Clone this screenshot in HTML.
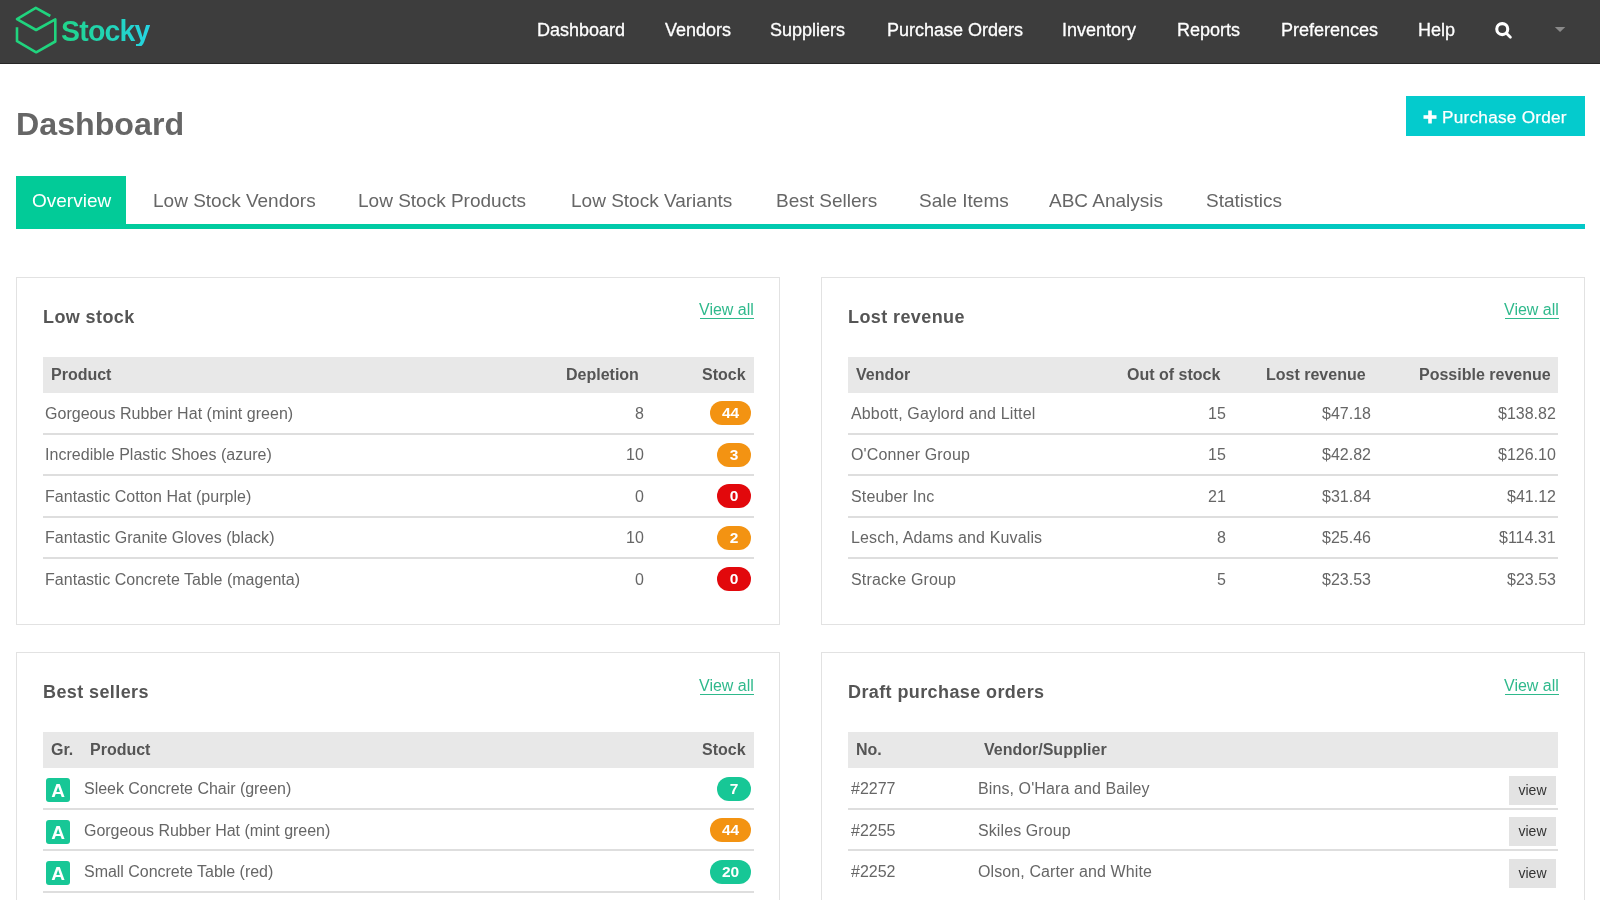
<!DOCTYPE html>
<html><head><meta charset="utf-8"><title>Stocky Dashboard</title>
<style>
html,body{margin:0;padding:0;}
body{width:1600px;height:900px;overflow:hidden;position:relative;background:#fff;font-family:"Liberation Sans",sans-serif;}
.t{position:absolute;white-space:nowrap;will-change:transform;}
.b{will-change:transform;}
</style></head><body>
<div style="position:absolute;left:0px;top:0px;width:1600px;height:63px;background:#3d3d3d"></div>
<div style="position:absolute;left:0px;top:63px;width:1600px;height:1px;background:#262626"></div>
<svg style="position:absolute;left:0;top:0" width="60" height="64" viewBox="0 0 60 64">
<polyline points="50.3,16.0 35.8,7.9 17.0,19.2 36.1,30.0 55.3,19.3 55.3,41.5 36.2,52.3 17.0,41.2 17.0,27.2" fill="none" stroke="#20d47e" stroke-width="2.6" stroke-linejoin="round" stroke-linecap="butt"/>
</svg>
<div class="t" style="left:61.20px;top:16.87px;font-size:28.5px;line-height:28.5px;color:#666;font-weight:700;background:linear-gradient(90deg,#20d488 0%,#22d4b8 55%,#25d4e4 100%);-webkit-background-clip:text;background-clip:text;color:transparent;letter-spacing:-0.8px;transform:scaleY(1.05);transform-origin:0 24.1px;">Stocky</div>
<div class="t" style="left:536.50px;top:21.36px;font-size:18px;line-height:18px;color:#fff;font-weight:400;-webkit-text-stroke:0.3px #fff;">Dashboard</div>
<div class="t" style="left:664.50px;top:21.36px;font-size:18px;line-height:18px;color:#fff;font-weight:400;-webkit-text-stroke:0.3px #fff;">Vendors</div>
<div class="t" style="left:770.25px;top:21.36px;font-size:18px;line-height:18px;color:#fff;font-weight:400;-webkit-text-stroke:0.3px #fff;">Suppliers</div>
<div class="t" style="left:886.50px;top:21.36px;font-size:18px;line-height:18px;color:#fff;font-weight:400;-webkit-text-stroke:0.3px #fff;">Purchase Orders</div>
<div class="t" style="left:1061.50px;top:21.36px;font-size:18px;line-height:18px;color:#fff;font-weight:400;-webkit-text-stroke:0.3px #fff;">Inventory</div>
<div class="t" style="left:1177.00px;top:21.36px;font-size:18px;line-height:18px;color:#fff;font-weight:400;-webkit-text-stroke:0.3px #fff;">Reports</div>
<div class="t" style="left:1280.50px;top:21.36px;font-size:18px;line-height:18px;color:#fff;font-weight:400;-webkit-text-stroke:0.3px #fff;">Preferences</div>
<div class="t" style="left:1417.50px;top:21.36px;font-size:18px;line-height:18px;color:#fff;font-weight:400;-webkit-text-stroke:0.3px #fff;">Help</div>
<svg style="position:absolute;left:1490px;top:17px" width="26" height="26" viewBox="0 0 26 26">
<circle cx="12.25" cy="12.1" r="5.5" fill="none" stroke="#fff" stroke-width="3.1"/>
<line x1="16.4" y1="16.3" x2="20.4" y2="20.3" stroke="#fff" stroke-width="2.8" stroke-linecap="round"/>
</svg>
<svg style="position:absolute;left:1552px;top:24px" width="16" height="12" viewBox="0 0 16 12"><polygon points="2.8,2.9 13.3,2.9 8.05,8.1" fill="#8a8a8a"/></svg>
<div class="t" style="left:16.00px;top:108.14px;font-size:32.2px;line-height:32.2px;color:#666;font-weight:700;">Dashboard</div>
<div style="position:absolute;left:1406px;top:96px;width:179px;height:40px;background:#04cbcd"></div>
<svg style="position:absolute;left:1423px;top:110px" width="14" height="14" viewBox="0 0 14 14"><rect x="5.2" y="0.5" width="3.6" height="13" fill="#fff"/><rect x="0.5" y="5.2" width="13" height="3.6" fill="#fff"/></svg>
<div class="t" style="left:1441.50px;top:109.44px;font-size:17.2px;line-height:17.2px;color:#fff;font-weight:400;letter-spacing:0.25px;-webkit-text-stroke:0.25px #fff;">Purchase Order</div>
<div style="position:absolute;left:16px;top:176px;width:110px;height:48px;background:#02cb98"></div>
<div style="position:absolute;left:16px;top:224px;width:1569px;height:5px;background:linear-gradient(90deg,#00cc99,#03c8c8)"></div>
<div class="t" style="left:32.00px;top:190.92px;font-size:19px;line-height:19px;color:#fff;font-weight:400;">Overview</div>
<div class="t" style="left:152.90px;top:190.92px;font-size:19px;line-height:19px;color:#666;font-weight:400;">Low Stock Vendors</div>
<div class="t" style="left:357.75px;top:190.92px;font-size:19px;line-height:19px;color:#666;font-weight:400;">Low Stock Products</div>
<div class="t" style="left:571.25px;top:190.92px;font-size:19px;line-height:19px;color:#666;font-weight:400;">Low Stock Variants</div>
<div class="t" style="left:776.00px;top:190.92px;font-size:19px;line-height:19px;color:#666;font-weight:400;">Best Sellers</div>
<div class="t" style="left:918.50px;top:190.92px;font-size:19px;line-height:19px;color:#666;font-weight:400;">Sale Items</div>
<div class="t" style="left:1049.25px;top:190.92px;font-size:19px;line-height:19px;color:#666;font-weight:400;">ABC Analysis</div>
<div class="t" style="left:1205.50px;top:190.92px;font-size:19px;line-height:19px;color:#666;font-weight:400;">Statistics</div>
<div style="position:absolute;left:16px;top:277px;width:764px;height:348px;border:1px solid #e2e2e2;box-sizing:border-box;background:#fff"></div>
<div style="position:absolute;left:821px;top:277px;width:764px;height:348px;border:1px solid #e2e2e2;box-sizing:border-box;background:#fff"></div>
<div style="position:absolute;left:16px;top:652px;width:764px;height:308px;border:1px solid #e2e2e2;box-sizing:border-box;background:#fff"></div>
<div style="position:absolute;left:821px;top:652px;width:764px;height:308px;border:1px solid #e2e2e2;box-sizing:border-box;background:#fff"></div>
<div class="t" style="left:43.00px;top:307.66px;font-size:18px;line-height:18px;color:#555;font-weight:700;letter-spacing:0.4px;">Low stock</div>
<div class="t" style="right:845.80px;top:302.06px;font-size:16px;line-height:16px;color:#2fb98c;font-weight:400;">View all</div>
<div style="position:absolute;left:700.0px;top:318.20000000000005px;width:54.0px;height:1.2px;background:#2fb98c"></div>
<div style="position:absolute;left:43px;top:357px;width:711px;height:35.5px;background:#e8e8e8"></div>
<div style="position:absolute;left:43px;top:432.5px;width:711px;height:2.0px;background:#dedede"></div>
<div style="position:absolute;left:43px;top:474.0px;width:711px;height:2.0px;background:#dedede"></div>
<div style="position:absolute;left:43px;top:515.5px;width:711px;height:2.0px;background:#dedede"></div>
<div style="position:absolute;left:43px;top:557.0px;width:711px;height:2.0px;background:#dedede"></div>
<div class="t" style="left:51.00px;top:366.86px;font-size:16px;line-height:16px;color:#555;font-weight:700;">Product</div>
<div class="t" style="right:961.50px;top:366.86px;font-size:16px;line-height:16px;color:#555;font-weight:700;">Depletion</div>
<div class="t" style="right:854.50px;top:366.86px;font-size:16px;line-height:16px;color:#555;font-weight:700;">Stock</div>
<div class="t" style="left:45.00px;top:405.76px;font-size:16px;line-height:16px;color:#666;font-weight:400;letter-spacing:0.03px;">Gorgeous Rubber Hat (mint green)</div>
<div class="t" style="right:956.20px;top:405.76px;font-size:16px;line-height:16px;color:#666;font-weight:400;">8</div>
<div class="b" style="position:absolute;left:710px;top:401.0px;width:41px;height:24px;border-radius:12px;background:#f39312;color:#fff;font-weight:700;font-size:15.5px;line-height:24px;text-align:center">44</div>
<div class="t" style="left:45.00px;top:447.26px;font-size:16px;line-height:16px;color:#666;font-weight:400;letter-spacing:0.03px;">Incredible Plastic Shoes (azure)</div>
<div class="t" style="right:956.20px;top:447.26px;font-size:16px;line-height:16px;color:#666;font-weight:400;">10</div>
<div class="b" style="position:absolute;left:717px;top:442.5px;width:34px;height:24px;border-radius:12px;background:#f39312;color:#fff;font-weight:700;font-size:15.5px;line-height:24px;text-align:center">3</div>
<div class="t" style="left:45.00px;top:488.76px;font-size:16px;line-height:16px;color:#666;font-weight:400;letter-spacing:0.03px;">Fantastic Cotton Hat (purple)</div>
<div class="t" style="right:956.20px;top:488.76px;font-size:16px;line-height:16px;color:#666;font-weight:400;">0</div>
<div class="b" style="position:absolute;left:717px;top:484.0px;width:34px;height:24px;border-radius:12px;background:#e2080c;color:#fff;font-weight:700;font-size:15.5px;line-height:24px;text-align:center">0</div>
<div class="t" style="left:45.00px;top:530.26px;font-size:16px;line-height:16px;color:#666;font-weight:400;letter-spacing:0.03px;">Fantastic Granite Gloves (black)</div>
<div class="t" style="right:956.20px;top:530.26px;font-size:16px;line-height:16px;color:#666;font-weight:400;">10</div>
<div class="b" style="position:absolute;left:717px;top:525.5px;width:34px;height:24px;border-radius:12px;background:#f39312;color:#fff;font-weight:700;font-size:15.5px;line-height:24px;text-align:center">2</div>
<div class="t" style="left:45.00px;top:571.76px;font-size:16px;line-height:16px;color:#666;font-weight:400;letter-spacing:0.03px;">Fantastic Concrete Table (magenta)</div>
<div class="t" style="right:956.20px;top:571.76px;font-size:16px;line-height:16px;color:#666;font-weight:400;">0</div>
<div class="b" style="position:absolute;left:717px;top:567.0px;width:34px;height:24px;border-radius:12px;background:#e2080c;color:#fff;font-weight:700;font-size:15.5px;line-height:24px;text-align:center">0</div>
<div class="t" style="left:848.00px;top:307.66px;font-size:18px;line-height:18px;color:#555;font-weight:700;letter-spacing:0.4px;">Lost revenue</div>
<div class="t" style="right:41.30px;top:302.06px;font-size:16px;line-height:16px;color:#2fb98c;font-weight:400;">View all</div>
<div style="position:absolute;left:1504.5px;top:318.20000000000005px;width:54.0px;height:1.2px;background:#2fb98c"></div>
<div style="position:absolute;left:848px;top:357px;width:710px;height:35.5px;background:#e8e8e8"></div>
<div style="position:absolute;left:848px;top:432.5px;width:710px;height:2.0px;background:#dedede"></div>
<div style="position:absolute;left:848px;top:474.0px;width:710px;height:2.0px;background:#dedede"></div>
<div style="position:absolute;left:848px;top:515.5px;width:710px;height:2.0px;background:#dedede"></div>
<div style="position:absolute;left:848px;top:557.0px;width:710px;height:2.0px;background:#dedede"></div>
<div class="t" style="left:855.50px;top:366.86px;font-size:16px;line-height:16px;color:#555;font-weight:700;">Vendor</div>
<div class="t" style="right:380.00px;top:366.86px;font-size:16px;line-height:16px;color:#555;font-weight:700;">Out of stock</div>
<div class="t" style="right:234.50px;top:366.86px;font-size:16px;line-height:16px;color:#555;font-weight:700;">Lost revenue</div>
<div class="t" style="right:49.50px;top:366.86px;font-size:16px;line-height:16px;color:#555;font-weight:700;">Possible revenue</div>
<div class="t" style="left:850.50px;top:405.76px;font-size:16px;line-height:16px;color:#666;font-weight:400;letter-spacing:0.15px;">Abbott, Gaylord and Littel</div>
<div class="t" style="right:374.30px;top:405.76px;font-size:16px;line-height:16px;color:#666;font-weight:400;">15</div>
<div class="t" style="right:229.30px;top:405.76px;font-size:16px;line-height:16px;color:#666;font-weight:400;">$47.18</div>
<div class="t" style="right:44.30px;top:405.76px;font-size:16px;line-height:16px;color:#666;font-weight:400;">$138.82</div>
<div class="t" style="left:850.50px;top:447.26px;font-size:16px;line-height:16px;color:#666;font-weight:400;letter-spacing:0.15px;">O'Conner Group</div>
<div class="t" style="right:374.30px;top:447.26px;font-size:16px;line-height:16px;color:#666;font-weight:400;">15</div>
<div class="t" style="right:229.30px;top:447.26px;font-size:16px;line-height:16px;color:#666;font-weight:400;">$42.82</div>
<div class="t" style="right:44.30px;top:447.26px;font-size:16px;line-height:16px;color:#666;font-weight:400;">$126.10</div>
<div class="t" style="left:850.50px;top:488.76px;font-size:16px;line-height:16px;color:#666;font-weight:400;letter-spacing:0.15px;">Steuber Inc</div>
<div class="t" style="right:374.30px;top:488.76px;font-size:16px;line-height:16px;color:#666;font-weight:400;">21</div>
<div class="t" style="right:229.30px;top:488.76px;font-size:16px;line-height:16px;color:#666;font-weight:400;">$31.84</div>
<div class="t" style="right:44.30px;top:488.76px;font-size:16px;line-height:16px;color:#666;font-weight:400;">$41.12</div>
<div class="t" style="left:850.50px;top:530.26px;font-size:16px;line-height:16px;color:#666;font-weight:400;letter-spacing:0.15px;">Lesch, Adams and Kuvalis</div>
<div class="t" style="right:374.30px;top:530.26px;font-size:16px;line-height:16px;color:#666;font-weight:400;">8</div>
<div class="t" style="right:229.30px;top:530.26px;font-size:16px;line-height:16px;color:#666;font-weight:400;">$25.46</div>
<div class="t" style="right:44.30px;top:530.26px;font-size:16px;line-height:16px;color:#666;font-weight:400;">$114.31</div>
<div class="t" style="left:850.50px;top:571.76px;font-size:16px;line-height:16px;color:#666;font-weight:400;letter-spacing:0.15px;">Stracke Group</div>
<div class="t" style="right:374.30px;top:571.76px;font-size:16px;line-height:16px;color:#666;font-weight:400;">5</div>
<div class="t" style="right:229.30px;top:571.76px;font-size:16px;line-height:16px;color:#666;font-weight:400;">$23.53</div>
<div class="t" style="right:44.30px;top:571.76px;font-size:16px;line-height:16px;color:#666;font-weight:400;">$23.53</div>
<div class="t" style="left:43.00px;top:683.16px;font-size:18px;line-height:18px;color:#555;font-weight:700;letter-spacing:0.4px;">Best sellers</div>
<div class="t" style="right:845.80px;top:677.56px;font-size:16px;line-height:16px;color:#2fb98c;font-weight:400;">View all</div>
<div style="position:absolute;left:700.0px;top:693.7px;width:54.0px;height:1.2px;background:#2fb98c"></div>
<div style="position:absolute;left:43px;top:732.3px;width:711px;height:35.5px;background:#e8e8e8"></div>
<div style="position:absolute;left:43px;top:807.8px;width:711px;height:2.0px;background:#dedede"></div>
<div style="position:absolute;left:43px;top:849.3px;width:711px;height:2.0px;background:#dedede"></div>
<div style="position:absolute;left:43px;top:890.8px;width:711px;height:2.0px;background:#dedede"></div>
<div class="t" style="left:50.50px;top:742.36px;font-size:16px;line-height:16px;color:#555;font-weight:700;">Gr.</div>
<div class="t" style="left:89.50px;top:742.36px;font-size:16px;line-height:16px;color:#555;font-weight:700;">Product</div>
<div class="t" style="right:854.50px;top:742.36px;font-size:16px;line-height:16px;color:#555;font-weight:700;">Stock</div>
<div class="b" style="position:absolute;left:46px;top:778.0px;width:24px;height:24px;border-radius:3px;background:#17c796;color:#fff;font-weight:700;font-size:19px;line-height:26px;text-align:center">A</div>
<div class="t" style="left:84.00px;top:781.26px;font-size:16px;line-height:16px;color:#666;font-weight:400;letter-spacing:-0.03px;">Sleek Concrete Chair (green)</div>
<div class="b" style="position:absolute;left:717px;top:776.5px;width:34px;height:24px;border-radius:12px;background:#17c796;color:#fff;font-weight:700;font-size:15.5px;line-height:24px;text-align:center">7</div>
<div class="b" style="position:absolute;left:46px;top:819.5px;width:24px;height:24px;border-radius:3px;background:#17c796;color:#fff;font-weight:700;font-size:19px;line-height:26px;text-align:center">A</div>
<div class="t" style="left:84.00px;top:822.76px;font-size:16px;line-height:16px;color:#666;font-weight:400;letter-spacing:-0.03px;">Gorgeous Rubber Hat (mint green)</div>
<div class="b" style="position:absolute;left:710px;top:818.0px;width:41px;height:24px;border-radius:12px;background:#f39312;color:#fff;font-weight:700;font-size:15.5px;line-height:24px;text-align:center">44</div>
<div class="b" style="position:absolute;left:46px;top:861.0px;width:24px;height:24px;border-radius:3px;background:#17c796;color:#fff;font-weight:700;font-size:19px;line-height:26px;text-align:center">A</div>
<div class="t" style="left:84.00px;top:864.26px;font-size:16px;line-height:16px;color:#666;font-weight:400;letter-spacing:-0.03px;">Small Concrete Table (red)</div>
<div class="b" style="position:absolute;left:710px;top:859.5px;width:41px;height:24px;border-radius:12px;background:#17c796;color:#fff;font-weight:700;font-size:15.5px;line-height:24px;text-align:center">20</div>
<div class="t" style="left:848.00px;top:683.16px;font-size:18px;line-height:18px;color:#555;font-weight:700;letter-spacing:0.4px;">Draft purchase orders</div>
<div class="t" style="right:41.30px;top:677.56px;font-size:16px;line-height:16px;color:#2fb98c;font-weight:400;">View all</div>
<div style="position:absolute;left:1504.5px;top:693.7px;width:54.0px;height:1.2px;background:#2fb98c"></div>
<div style="position:absolute;left:848px;top:732.3px;width:710px;height:35.5px;background:#e8e8e8"></div>
<div style="position:absolute;left:848px;top:807.8px;width:710px;height:2.0px;background:#dedede"></div>
<div style="position:absolute;left:848px;top:849.3px;width:710px;height:2.0px;background:#dedede"></div>
<div class="t" style="left:855.50px;top:742.36px;font-size:16px;line-height:16px;color:#555;font-weight:700;">No.</div>
<div class="t" style="left:983.50px;top:742.36px;font-size:16px;line-height:16px;color:#555;font-weight:700;">Vendor/Supplier</div>
<div class="t" style="left:851.00px;top:781.26px;font-size:16px;line-height:16px;color:#666;font-weight:400;">#2277</div>
<div class="t" style="left:977.50px;top:781.26px;font-size:16px;line-height:16px;color:#666;font-weight:400;letter-spacing:0.1px;">Bins, O'Hara and Bailey</div>
<div class="b" style="position:absolute;left:1509px;top:775.6px;width:47px;height:28.5px;background:#e3e3e3;color:#333;font-size:14px;line-height:29px;text-align:center">view</div>
<div class="t" style="left:851.00px;top:822.76px;font-size:16px;line-height:16px;color:#666;font-weight:400;">#2255</div>
<div class="t" style="left:977.50px;top:822.76px;font-size:16px;line-height:16px;color:#666;font-weight:400;letter-spacing:0.1px;">Skiles Group</div>
<div class="b" style="position:absolute;left:1509px;top:817.1px;width:47px;height:28.5px;background:#e3e3e3;color:#333;font-size:14px;line-height:29px;text-align:center">view</div>
<div class="t" style="left:851.00px;top:864.26px;font-size:16px;line-height:16px;color:#666;font-weight:400;">#2252</div>
<div class="t" style="left:977.50px;top:864.26px;font-size:16px;line-height:16px;color:#666;font-weight:400;letter-spacing:0.1px;">Olson, Carter and White</div>
<div class="b" style="position:absolute;left:1509px;top:858.6px;width:47px;height:28.5px;background:#e3e3e3;color:#333;font-size:14px;line-height:29px;text-align:center">view</div>
</body></html>
